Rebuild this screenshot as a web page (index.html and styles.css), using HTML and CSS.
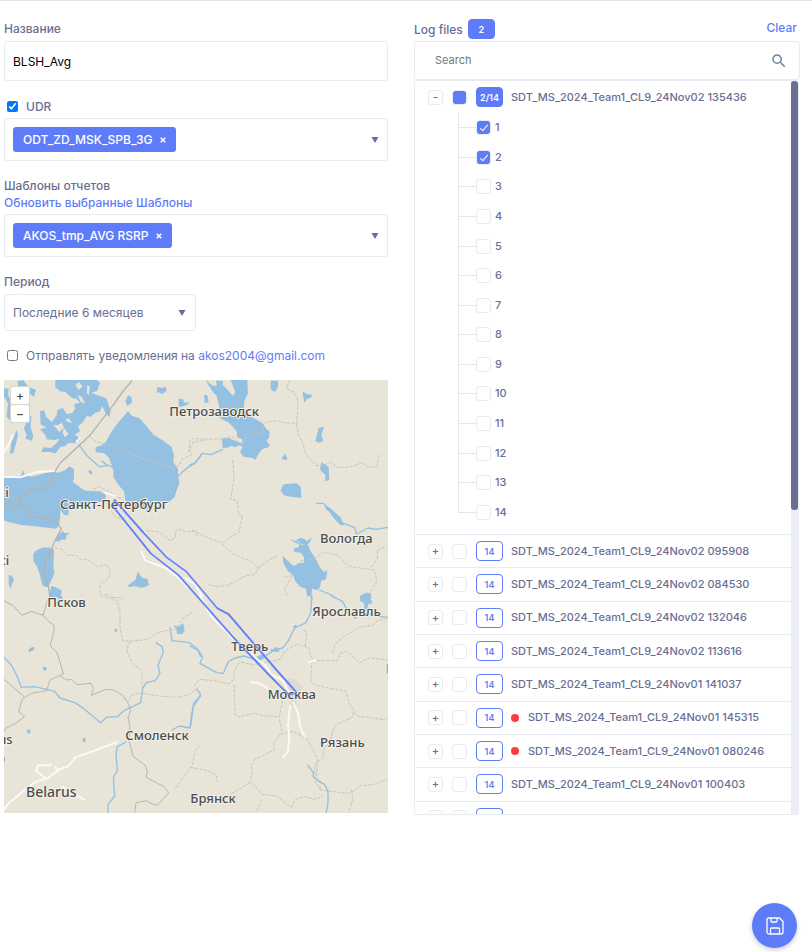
FILE: index.html
```
<!DOCTYPE html>
<html lang="ru">
<head>
<meta charset="utf-8">
<title>BLSH_Avg</title>
<link rel="stylesheet" href="styles.css">
</head>
<body>
<main class="page">
  <form class="settings">
    <div class="field">
      <label for="name">Название</label>
      <input class="text-input" id="name" type="text" value="BLSH_Avg">
    </div>
    <div class="field field-multi">
      <label class="check-row"><input type="checkbox" checked><span>UDR</span></label>
      <div class="multi">
        <span class="chip">ODT_ZD_MSK_SPB_3G <button type="button" aria-label="Удалить"><svg viewBox="0 0 6 6"><path d="M.7.7l4.6 4.6M5.3.7L.7 5.3"/></svg></button></span>
        <svg class="arrow" viewBox="0 0 8 6"><path d="M.5 0h7L4 6z"/></svg>
      </div>
    </div>
    <div class="field field-multi">
      <div class="label-lines"><span>Шаблоны отчетов</span><a href="#">Обновить выбранные Шаблоны</a></div>
      <div class="multi">
        <span class="chip">AKOS_tmp_AVG RSRP <button type="button" aria-label="Удалить"><svg viewBox="0 0 6 6"><path d="M.7.7l4.6 4.6M5.3.7L.7 5.3"/></svg></button></span>
        <svg class="arrow" viewBox="0 0 8 6"><path d="M.5 0h7L4 6z"/></svg>
      </div>
    </div>
    <div class="field">
      <label for="period">Период</label>
      <div class="select-wrap">
        <select id="period"><option>Последние 6 месяцев</option></select>
        <svg class="arrow" viewBox="0 0 8 6"><path d="M.5 0h7L4 6z"/></svg>
      </div>
    </div>
    <div class="check-row notify"><input id="notify" type="checkbox"><span><label for="notify">Отправлять уведомления на</label> <a href="#">akos2004@gmail.com</a></span></div>

    <div class="map">
      <svg class="map-canvas" viewBox="12 6 1152 1299" preserveAspectRatio="xMidYMid slice">
        <!-- north-west -->
        <g>
          <g class="water">
            <path d="M12 300L40 300 70 290 95 296 140 284 160 282 175 284 196 276 208 265 222 274 222 300 218 312 232 322 255 338 300 340 318 352 316 366 300 372 262 372 215 384 208 392 204 412 192 410 182 396 178 440 168 452 130 448 60 440 12 428z"/>
            <path d="M384 100l12 14 22 6 18 20 24 30 30 18 24 18 8 24 -2 22 14 20 0 18 4 26 -10 26 -4 16 -20 16 -26 -4 -20 4 -20 24 -14 -14 -20 12 -24 -2 -8 -54 -12 -14 -20 -28 0 -26 -14 -34 -14 -12 -26 -4 2 -14 20 -8 10 -8 10 -20 20 -30z"/>
            <path d="M310 208l10-2 8 14-6 12-10-8zM264 280l8-4 6 10-6 4zM384 52l10 4 2 18-14 10-6-14zM472 26l14 4 10-4 4 12-14 10-12-6-4 4zM536 62l14 2 2 10 18-2-10 10-24 6z"/>
            <path d="M166 6L290 6 300 14 292 38 274 44 292 52 318 60 324 76 332 100 328 116 318 108 306 84 300 100 286 104 270 118 262 112 246 136 234 144 240 160 224 170 234 176 240 186 226 196 206 194 196 204 182 206 166 226 148 222 124 222 130 208 152 210 170 196 178 182 164 186 140 184 136 170 120 154 140 148 122 140 120 100 132 96 138 116 156 132 170 112 172 96 188 90 200 108 216 106 226 92 222 78 240 74 230 62 216 60 196 42 180 40 166 28z"/>
            <path d="M12 30l14 2-2 18 10 20 0 40 12 6-8 20-18-20 4-40-12-20zM52 10l18-4 14 20 24 10-6 20-20-14-26-12zM76 108l18 6-2 36 8 22-4 16-20-6 4-12-8-18 6-16zM50 156l4 16-6 24-8 28-10 4 4-34zM70 276l4 16-8 12-2-14zM164 490l12-20 14-12 4 8 16-2-10 8-4 14-12-2-4 6zM100 528q8-14 32-20l22 2 8 6-2 56 4 12-8 18-12 26-16-4-10-40-8-20-10-16zM26 590l10 4 6 12-8 16 0 12-8-14zM154 624l14 4 18 10-6 20-34 0z"/>
            <path d="M414 580l10 18 20 6 2 18-20 8-24-6-16 4-2-6 22-16z"/>
          </g>
          <g class="land"><path d="M236 12l12 12-12 12-10-14zM232 50l14 8 10 20-14-6zM262 22l8 4-4 26-6-8zM160 140l12 2 14-8 6 16-14 12zM192 150l14 18-12 10-6-14zM186 118l10 8 10-6 10 16-12-4z"/></g>
          <g class="road-thin"><path d="M396 8L372 36 336 86 270 172 236 204 180 256 160 288 156 308 136 332 96 336 60 358 30 372 12 374M12 394L36 392 62 374 94 416 162 428 184 452 164 490 152 520 136 550 134 590 146 628 150 660"/></g>
          <g class="border"><path d="M270 176l20 16 28 6 90 36 92 30 26 8 14-14 4-14 30-14-6-20 2-24 16-6 10 4 20-2M164 510l22 4 18 18 24 0 14 12 22 2 28 20 28-6 10 18-2 20-22 16-8 20 8 20 16-6 14 10 34 2M280 334l16-8 30 14 44 26M334 400l10 16 22 8 18-18M440 458l36 4 20 14 14 12 16-10 2-20 16-4 14 8 24-2 10 14"/></g>
          <g class="river"><path d="M236 200l26 34 36 32 30-4 26 20M320 260l-14-10M524 296l10-2 30-26 20-12 20-24"/></g>
          <g class="road"><path d="M12 224l12-20 14-32M12 296L60 298 110 282 162 278M230 190l8-8M424 520l12 28 60 22 44 34 22 24M556 600l30 20 20 34M316 344l30 10"/></g>
        </g>
        <!-- north-east -->
        <g transform="translate(570 0)">
          <g class="water">
            <path d="M46 6l20 16 14 2-2-16 20 0 0 12 32 34 6-12-14-36 50 0 2 40-12 26 0 20 22 24 34 20 10 16 10 8 0 18-8 10 10 14-6 6-18 6-12 16-8 16-8-6-28-4-10-14 8-14-8-6-16 6-10-4-14 6-12 0-2-28 20-2 22 10 20 8-2-14-14-6-2-18-14-16-12-12-16-6-14-12 4-26-8-34-14-16zM42 50l10 2 4 20-12 4zM242 8l22 0 0 20-10 14-12-8z"/>
            <path d="M338 40l12 8 16 2-2 8-14 6-6 10-4-14zM386 150l16-4-8 26 6 16-12 6-12-4zM284 226l6 10 2 10-16-2 0-6 6-4zM394 252l8 6 14 8 2 40-12 4 0-20-16-14zM288 318l32-2 12 10 2 34-32-4-20-4-10-14 6-16zM404 384l14 4 18 16 16 14 10 24-10 0-18-18-16-22-10-8z"/>
            <path d="M298 484l24 6 12 12 20-2 8 20 10 14 18 34 12 14 10-6-4 28-14 4-4 20-10 8-14-4-2 20-12 4-4-24-18-6-14-16-6-18-16-12-14-24-2-22 26 24 10 6 10-8 18-2 0-16-10-14-18-2-4-10 16-4 2-8zM318 486l12-6 12 2 8 8 16-12-6 14-12 10-16-4-6-8zM512 652l18-8 12 2 2 14-36 0z"/>
          </g>
          <g class="river"><path d="M0 260l14-4 22-30 28 4 34-16M380 376l20 0 16 16M454 434l40 14 6 20 34-18 24 4 34-6M360 636l4 24M388 636l34 14 14 10M340 488l10 4"/></g>
          <g class="border"><path d="M298 6l-8 26 22 10 12 24-4 70-38-2-22-6-30 4-14 12 4 14-56 24-4 14-20-8-14-12-40 8-10-2-30 4-36 6-10 20-10 14M320 138l4 30 16 30 6 30 18 20 14 14 18 2 28-12 16 16 32 0 24-6 20-8 20 14 24-2 6-28 10-12M128 246l4 56-10 62 20 4 4 42 12 4-12 50-20 10-26 20-30-8-36-16-30-16M96 498l34 30 50 20 24 22-8 18-30 6-36 20-18 8-28 4-28-6M204 570l30-22 30-16M330 550l44-8 26-20 46 10 28 32 50 8 30 4 6 34-24 40M562 518l28-16M562 520l0 22-20 28M284 598l24-6-24 40 8 26"/></g>
        </g>
        <!-- south-west -->
        <g transform="translate(0 654)">
          <g class="water"><path d="M90 156l10-4 4 8-14 8-6-4zM128 212l12 2 0 8-10 2zM344 98l8 2-2 10-6-4zM80 402l10-2 2 10-8 4zM248 430l6-6 4 8-4 6-6 0zM520 88l14 4 16-10 4 20-6 12-16 0-4-16zM172 0l14 0 2 8-14 0z"/></g>
          <g class="river"><path d="M12 184l24 26 14 28 14 36 40-2 60 14 16 20 44 14 22 14 56 46 18-16 32-2 20-18 50-24 6-42 10-18 28-6 14-22-6-24 16-40-4-16-18-12M510 96l6 38 52 6 24 18 10 24M602 300l-20 20-8 40-4 36-32-6-22 12M378 438l-26 14-4 24 4 48-12 20 4 56-20 26 0 30"/></g>
          <g class="border strong"><path d="M12 14l26 14 28 30 28-12 36 12 10-40 12-18M124 54l20 20 18 14 0 18-12 44 20 18 10 30 10 36-40 18-10 32-46 8-28 18-10 38 18 14-30 22-26 12-16 28M12 250l60 52M180 240l20 12 14-2 18 16 40-4 8 14-6 22 44-18 24 2 26 16 18 26 6 20-8 20 6 28-4 40 14 50 36 26 6 20-4 16 54 28 14 18-34 38-20-6-12-8-32 6-4 30"/></g>
          <g class="border"><path d="M316 2l36 12 8 34 0 50 8 36 22 2 54-6 30-20 26-6 32-6 14-30 30-18M390 136l-10 26 16 38 30 26 0 64-34 8-4 20M426 292l50 8 54 4 36-8 30-22M600 448l-14 16-10 46-54 72"/></g>
          <g class="road"><path d="M12 640l12-16 50-42 32-24 38-12 30-24 32-12 20-26 58-20 68-26M154 508l-40 0-6 16 28 22M166 514l8 14M186 572l30 18 36 20"/></g>
        </g>
        <!-- south-east -->
        <g transform="translate(570 654)">
          <g class="water"><path d="M512 0l32 0-2 10 6 12-12 2-4 12 6 14-14-6-2-22-12-8zM240 160l10 0 8-8 12 10-6 6-20-2zM198 184l14-8 8 2 2 10-14 6zM308 92l10-6 4 6-8 4z"/></g>
          <g class="river"><path d="M0 150l28 16 10 18-8 18 50 28 20 2 16-36 20-10 26-6 44 14 46-32 26-6 16-20 20-40 34-16 14-30 4-50M424 0l34 16 14 28 24 22 26-18 36 12 34 4M20 280l12 14-12 24-10 12-8 60M354 508l16 22 0 14 34 22 10 20 0 36-6 30"/></g>
          <g class="border"><path d="M12 270l16-20 46 4 44 10 14-16 2-26 16-24 40 8 36-6 46-10 12-26 40-20 32 12 6 24 10 14 16 0 54 0 8-22 20-6 14 12 24 22 30-14 60 6M346 150l4-40-16-14M428 170l6-24 26-24 48-28 40-6 14-14 28-6M366 194l-4 60 14 14 92 18 10 36 14 22-6 20-44 20-14 18-6 40-20 12-4 34-24 16 4 60 20 20M490 350l14 10 86 12M132 266l4 92 12 4 44-10 30 8 46 2 8-40 0-10 30-10M268 370l6 24 0 20 34-8 42 22 14 24 18 34-2 66 12 10-4 20 84 10 22-8 16-14 46-6 34-14M270 416l-18 26 0 20-60 30-8 18 4 20-8 26 18 18 16 20 44 6 46 34 12-24 28-8 28 8 28-10M180 560l-54 32-16 10M0 514l54 10 24 12 4 22M200 646l16-36M484 580l4 30-12 40"/></g>
          <g class="urban"><path d="M276 250l30-4 34 24-20 30 0 30-14 0-10-40zM336 216l6-6 2 8z"/></g>
          <g class="road"><path d="M30 0l34 62 30 30 50 50 60 50 20 14 20 30 34 16 20 40M182 258l26 4 24 14M358 200l18-8M300 330l-6 60 4 30-4 46-14 18M310 320l14 30 6 42 14 30"/></g>
        </g>
        <path class="route" d="M338 384L344 366 430 464 500 538 558 580 652 691 686 709 826 872 890 944 868 951 844 928 800 884 700 778 534 590 452 526 338 384"/>
        <path class="edge" d="M1162 858v28M13 1137v14"/>
        <g class="names">
          <text x="508" y="115">Петрозаводск</text>
          <text x="180" y="392">Санкт-Петербург</text>
          <text x="960" y="494">Вологда</text>
          <text x="142" y="687">Псков</text>
          <text x="937" y="714">Ярославль</text>
          <text x="694" y="818">Тверь</text>
          <text x="803" y="962">Москва</text>
          <text x="960" y="1106">Рязань</text>
          <text x="376" y="1086">Смоленск</text>
          <text class="country" x="78" y="1256">Belarus</text>
          <text x="571" y="1276">Брянск</text>
          <text x="26" y="358" text-anchor="end">ci</text>
          <text x="28" y="560" text-anchor="end">ci</text>
          <text x="38" y="1097" text-anchor="end">us</text>
        </g>
        <path class="route over" d="M338 384L344 366 430 464M452 526L338 384M652 691L686 709 826 872 890 944 868 951 844 928 700 778"/>
      </svg>
      <div class="map-zoom"><button type="button">+</button><button type="button">−</button></div>
    </div>
  </form>

  <section class="logs">
    <header class="logs-head"><span>Log files</span><span class="badge solid">2</span><a href="#">Clear</a></header>
    <div class="search">
      <input type="search" placeholder="Search" aria-label="Search">
      <svg viewBox="0 0 24 24"><path d="M15.5 14h-.79l-.28-.27A6.47 6.47 0 0 0 16 9.5 6.5 6.5 0 1 0 9.5 16c1.61 0 3.09-.59 4.23-1.57l.27.28v.79l5 4.99L20.49 19l-4.99-5zm-6 0C7.01 14 5 11.99 5 9.5S7.01 5 9.500 5 14 7.01 14 9.5 11.99 14 9.500 14z"/></svg>
    </div>
    <div class="tree">
      <div class="tree-body">
        <div class="open-node">
          <div class="node"><button type="button" class="toggle">-</button><input class="box partial" type="checkbox" id="n0"><span class="badge solid">2/14</span><label for="n0">SDT_MS_2024_Team1_CL9_24Nov02 135436</label></div>
          <ul class="children">
            <li><label><input class="box" type="checkbox" checked>1</label></li>
            <li><label><input class="box" type="checkbox" checked>2</label></li>
            <li><label><input class="box" type="checkbox">3</label></li>
            <li><label><input class="box" type="checkbox">4</label></li>
            <li><label><input class="box" type="checkbox">5</label></li>
            <li><label><input class="box" type="checkbox">6</label></li>
            <li><label><input class="box" type="checkbox">7</label></li>
            <li><label><input class="box" type="checkbox">8</label></li>
            <li><label><input class="box" type="checkbox">9</label></li>
            <li><label><input class="box" type="checkbox">10</label></li>
            <li><label><input class="box" type="checkbox">11</label></li>
            <li><label><input class="box" type="checkbox">12</label></li>
            <li><label><input class="box" type="checkbox">13</label></li>
            <li><label><input class="box" type="checkbox">14</label></li>
          </ul>
        </div>
        <ul class="closed-nodes">
          <li class="node"><button type="button" class="toggle">+</button><input class="box" type="checkbox" id="n1"><span class="badge">14</span><label for="n1">SDT_MS_2024_Team1_CL9_24Nov02 095908</label></li>
          <li class="node"><button type="button" class="toggle">+</button><input class="box" type="checkbox" id="n2"><span class="badge">14</span><label for="n2">SDT_MS_2024_Team1_CL9_24Nov02 084530</label></li>
          <li class="node"><button type="button" class="toggle">+</button><input class="box" type="checkbox" id="n3"><span class="badge">14</span><label for="n3">SDT_MS_2024_Team1_CL9_24Nov02 132046</label></li>
          <li class="node"><button type="button" class="toggle">+</button><input class="box" type="checkbox" id="n4"><span class="badge">14</span><label for="n4">SDT_MS_2024_Team1_CL9_24Nov02 113616</label></li>
          <li class="node"><button type="button" class="toggle">+</button><input class="box" type="checkbox" id="n5"><span class="badge">14</span><label for="n5">SDT_MS_2024_Team1_CL9_24Nov01 141037</label></li>
          <li class="node"><button type="button" class="toggle">+</button><input class="box" type="checkbox" id="n6"><span class="badge">14</span><i class="dot"></i><label for="n6">SDT_MS_2024_Team1_CL9_24Nov01 145315</label></li>
          <li class="node"><button type="button" class="toggle">+</button><input class="box" type="checkbox" id="n7"><span class="badge">14</span><i class="dot"></i><label for="n7">SDT_MS_2024_Team1_CL9_24Nov01 080246</label></li>
          <li class="node"><button type="button" class="toggle">+</button><input class="box" type="checkbox" id="n8"><span class="badge">14</span><label for="n8">SDT_MS_2024_Team1_CL9_24Nov01 100403</label></li>
          <li class="node"><button type="button" class="toggle"></button><input class="box" type="checkbox" aria-label="Log"><span class="badge"></span></li>
        </ul>
      </div>
      <div class="track"><div class="thumb"></div></div>
    </div>
  </section>
</main>
<button type="button" class="save" aria-label="Save">
  <svg viewBox="0 0 18 18"><path d="M3 1h10.500l3.500 3.500V15a2 2 0 0 1-2 2H3a2 2 0 0 1-2-2V3a2 2 0 0 1 2-2zM5 1v3a1 1 0 0 0 1 1h4a1 1 0 0 0 1-1V1M4.500 17v-5a1 1 0 0 1 1-1h7a1 1 0 0 1 1 1v5"/></svg>
</button>
</body>
</html>
```

FILE: styles.css
```
* { box-sizing: border-box; }

body {
  margin: 0;
  border-top: 1px solid #e2e2e6;
  background: #fff;
  color: #696f93;
  font: 500 12px/17px Inter, "Noto Sans", sans-serif;
}

ul { margin: 0; padding: 0; list-style: none; }
a { color: #5f7cf8; text-decoration: none; }
button, input, select { font: inherit; color: inherit; }
button { padding: 0; cursor: pointer; }

.page {
  display: grid;
  grid-template-columns: minmax(0, 384fr) minmax(0, 386fr);
  gap: 26px;
  padding: 0 12px 0 4px;
}

.settings { display: flex; flex-direction: column; gap: 16px; padding-top: 19px; }
.field { display: flex; flex-direction: column; gap: 4px; }
.field-multi { gap: 3px; }
.label-lines { display: flex; flex-direction: column; align-items: flex-start; }

.text-input, .multi, .select-wrap select, .search {
  border: 1px solid #e9ebf3;
  border-radius: 3px;
  background: #fff;
}

.text-input { width: 100%; height: 40px; padding: 0 8px; color: #000; font-weight: 400; }

.check-row { display: flex; align-items: center; gap: 8px; }
.field .check-row { min-height: 18px; }
.check-row input { width: 11px; height: 11px; margin: 0 0 0 3px; accent-color: #0075ff; }

.multi { display: flex; align-items: center; justify-content: space-between; min-height: 43px; padding: 0 8px; }
.chip {
  display: flex;
  align-items: center;
  gap: 8px;
  height: 25px;
  padding: 0 10px;
  border-radius: 3px;
  background: #5f7cf8;
  color: #fff;
}
.chip button { display: flex; border: 0; background: none; }
.chip svg { width: 6px; height: 6px; fill: none; stroke: #fff; stroke-width: 1.5; }
.arrow { width: 8px; height: 6px; fill: #696f93; }

.select-wrap { display: grid; width: 50%; align-items: center; }
.select-wrap > * { grid-area: 1 / 1; }
.select-wrap select { width: 100%; height: 37px; padding: 0 8px; appearance: none; font-weight: 400; }
.select-wrap .arrow { justify-self: end; margin-right: 10px; pointer-events: none; }
.notify { font-weight: 400; }

.map { position: relative; aspect-ratio: 384 / 433; overflow: hidden; background: #e8e4d8; }
.map-canvas { display: block; width: 100%; height: 100%; }
.water { fill: #94c0e2; }
.land { fill: #e8e4d8; }
.urban { fill: #dfdbd2; }
.river, .road, .road-thin, .border, .route, .edge { fill: none; stroke-linejoin: round; }
.river, .road { stroke-linecap: round; }
.river { stroke: #94c0e2; stroke-width: 4; }
.road { stroke: #faf9f4; stroke-width: 6; }
.road-thin { stroke: #b5b2aa; stroke-width: 4; }
.border { stroke: #c8c5bb; stroke-width: 3; stroke-dasharray: 10 4; }
.strong { stroke: #b9b6ae; stroke-dasharray: none; }
.route { stroke: #6481fa; stroke-width: 5; }
.over { opacity: .7; }
.edge { stroke: #9a99a0; stroke-width: 3; }
.names {
  fill: #4c4d50;
  stroke: #f3f0e8;
  stroke-width: 6;
  stroke-linejoin: round;
  paint-order: stroke;
  font: 500 39px "Noto Sans", sans-serif;
}
.country { font-size: 42px; }

.map-zoom { position: absolute; top: 6px; left: 6px; display: grid; gap: 1px; padding: 1px; border-radius: 2px; background: #d9d6cd; }
.map-zoom button { width: 18px; height: 17px; border: 0; border-radius: 2px; background: #fff; color: #444; line-height: 17px; }

.logs { padding-top: 16px; }
.logs-head { display: flex; align-items: center; gap: 5px; height: 24px; }
.logs-head a { margin: 0 3px 4px auto; }

.badge {
  display: flex;
  align-items: center;
  justify-content: center;
  width: 27px;
  height: 20px;
  border: 1px solid #5f7cf8;
  border-radius: 4px;
  color: #5f7cf8;
  font-size: 9px;
  font-weight: 600;
}
.solid { background: #5f7cf8; color: #fff; }

.search { display: flex; align-items: center; height: 39px; padding: 0 11px 0 20px; }
.search input { flex: 1; min-width: 0; padding: 0; border: 0; outline: 0; background: none; font-size: 11px; font-weight: 400; }
.search input::placeholder { color: #757575; }
.search svg { width: 18px; height: 18px; fill: #7380a6; }

.tree { display: flex; max-height: 735px; margin-right: 1px; border: 1px solid #e9ebf3; border-radius: 3px; overflow: hidden; font-size: 11px; }
.tree-body { flex: 1; min-width: 0; }
.track { width: 7px; background: #ebedf4; }
.thumb { height: 429px; border-radius: 3px; background: #696f93; }

.node { display: flex; align-items: center; height: 32px; padding-left: 13px; white-space: nowrap; }
.node .box { margin: 0 9px; }
.node label { margin-left: 8px; }
.toggle { width: 15px; height: 15px; border: 1px solid #e9ebf3; border-radius: 3px; background: #fff; line-height: 12px; }

.box { position: relative; width: 15px; height: 15px; margin: 0; border: 1px solid #e9ebf3; border-radius: 3px; appearance: none; background: #fff; }
.box:checked, .partial { background: #5f7cf8; background-clip: padding-box; }
.box:checked::after {
  content: "";
  position: absolute;
  top: 2px;
  left: 5px;
  width: 3px;
  height: 7px;
  border: solid #fff;
  border-width: 0 1px 1px 0;
  transform: rotate(40deg);
}

.children { display: grid; grid-auto-rows: 1fr; min-height: 414px; padding-left: 43px; }
.children li {
  display: flex;
  align-items: center;
  background:
    linear-gradient(#e4e6ef, #e4e6ef) 0 0 / 1px 100% no-repeat,
    linear-gradient(#e4e6ef, #e4e6ef) 0 50% / 18px 1px no-repeat;
}
.children li:last-child { background-size: 1px 50%, 18px 1px; }
.children label { display: flex; align-items: center; gap: 4px; padding-left: 18px; }

.closed-nodes { display: grid; grid-auto-rows: 1fr; min-height: 300px; margin-top: 7px; }
.closed-nodes .node { height: auto; border-top: 1px solid #e9ebf3; }
.dot { width: 8px; height: 8px; margin-left: 8px; border-radius: 50%; background: #fb3d3f; }
.dot + label { margin-left: 9px; }

.save {
  position: fixed;
  right: 15px;
  bottom: 4px;
  display: grid;
  place-items: center;
  width: 45px;
  height: 45px;
  border: 0;
  border-radius: 50%;
  background: #5f7cf8;
  box-shadow: 0 2px 5px #0003;
}
.save svg { width: 18px; height: 18px; fill: none; stroke: #fff; stroke-width: 1.3; stroke-linejoin: round; }
```
